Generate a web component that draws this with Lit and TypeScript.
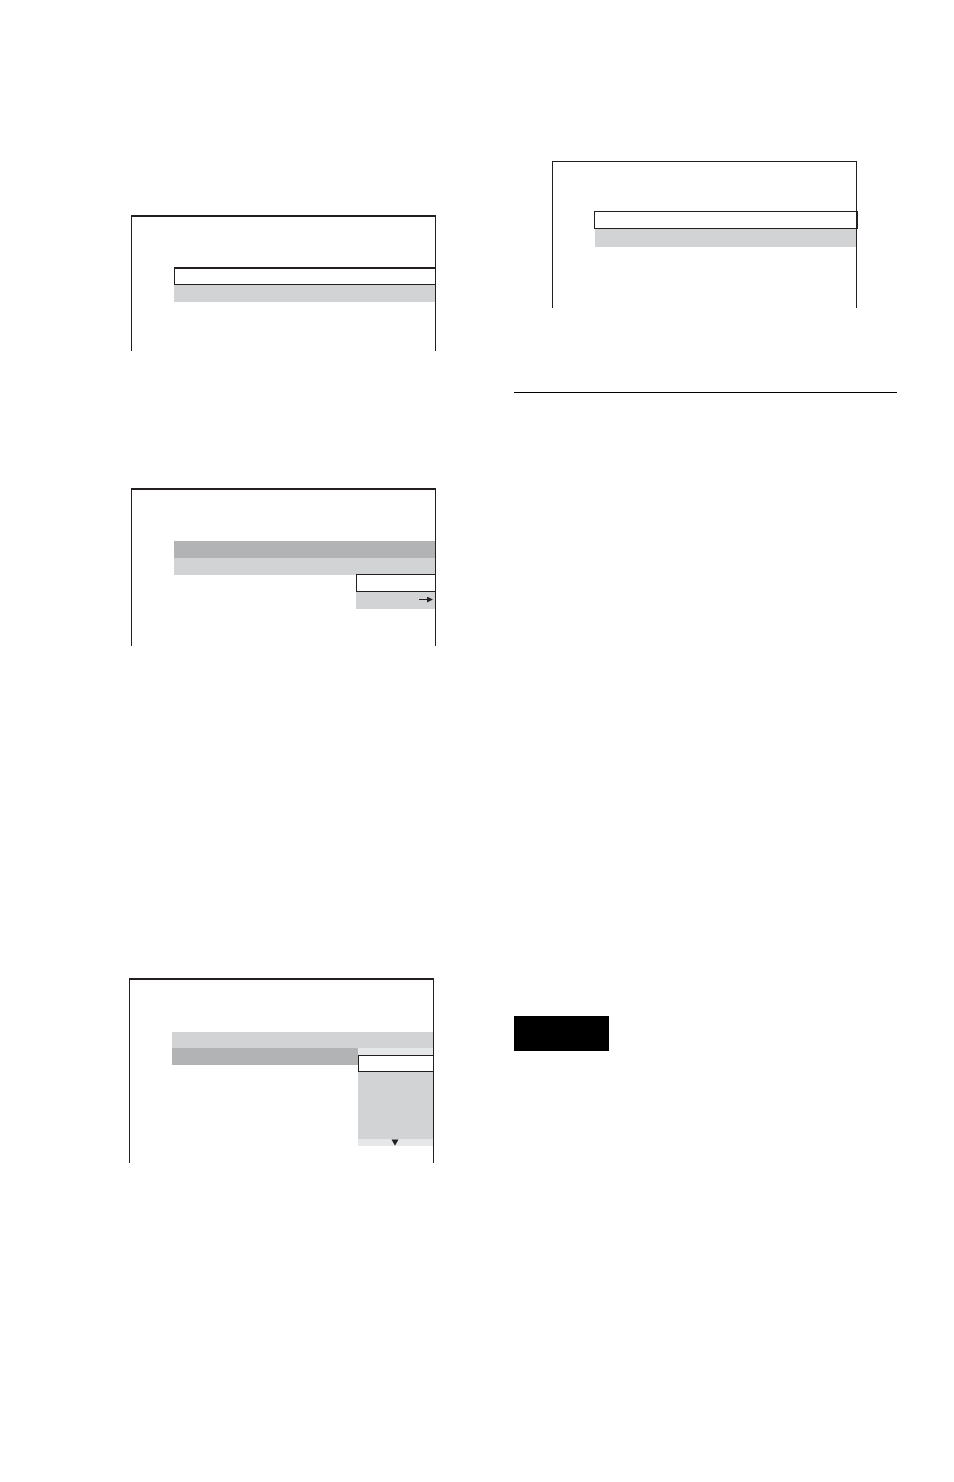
import { LitElement, html, css } from "lit";
import { customElement } from "lit/decorators.js";

@customElement("app-root")
export class AppRoot extends LitElement {
  static styles = css`
    :host {
      display: block;
      min-height: 100vh;
      background: #fff;
      font-family: "Liberation Sans", Arial, sans-serif;
      --line: #231f20;
      --light: #d1d3d4;
      --dark: #b1b3b5;
      --pale: #e6e7e8;
    }
    * {
      box-sizing: border-box;
    }
    .page {
      display: grid;
      grid-template-columns: 1fr 1fr;
      padding: 161px 57px 48px 131px;
    }
    .screen {
      border: 1px solid var(--line);
      border-top-width: 2px;
      border-bottom: 0;
      padding-left: 42px;
    }
    .left {
      padding-top: 54px;
    }
    .left .screen {
      margin-right: 78px;
    }
    .first {
      height: 136px;
      padding-top: 50px;
    }
    .second {
      height: 158px;
      margin-top: 137px;
      padding-top: 51px;
    }
    .left .third {
      height: 185px;
      margin: 332px 80px 0 -2px;
      padding-top: 52px;
    }
    .right .screen {
      height: 147px;
      margin: 0 40px 0 38px;
      padding-top: 49px;
      border-top-width: 1px;
    }
    .list {
      list-style: none;
      margin: 0;
      padding: 0;
      position: relative;
    }
    .row {
      height: 17px;
      background: var(--light);
    }
    .short {
      height: 16px;
    }
    .dark {
      background: var(--dark);
    }
    .picked {
      height: 18px;
      background: #fff;
      border: 1px solid var(--line);
      border-right: 0;
    }
    .heavy {
      border-top-width: 2px;
    }
    .right .picked {
      border-right: 2px solid var(--line);
      margin: 0 -2px 0 -1px;
    }
    .right .row:last-child {
      height: 18px;
    }
    .popup {
      position: absolute;
      right: 0;
      list-style: none;
      margin: 0;
      padding: 0;
    }
    .source {
      top: 33px;
      width: 79px;
    }
    .values {
      top: 16px;
      width: 75px;
    }
    .values .picked {
      height: 17px;
    }
    .options {
      height: 67px;
      background: var(--light);
    }
    .scroll {
      height: 7px;
      background: var(--pale);
      display: flex;
      justify-content: center;
    }
    .more {
      display: flex;
      justify-content: flex-end;
      align-items: center;
      padding-right: 2px;
    }
    svg {
      display: block;
      fill: var(--line);
    }
    .rule {
      border: 0;
      border-top: 1px solid #000;
      margin: 84px 0 0;
    }
    .tag {
      width: 95px;
      height: 35px;
      margin-top: 623px;
      background: #000;
    }
  `;

  render() {
    return html`
      <main class="page">
        <section class="left">
          <div class="screen first">
            <ul class="list">
              <li class="row picked heavy"></li>
              <li class="row"></li>
            </ul>
          </div>
          <div class="screen second">
            <ul class="list">
              <li class="row dark"></li>
              <li class="row">
                <ul class="popup source">
                  <li class="row picked"></li>
                  <li class="row more">
                    <svg width="14" height="7" viewBox="0 0 14 7" aria-hidden="true">
                      <path d="M0 2h8V-0.4L14 2.5 8 5.6V3H0z" />
                    </svg>
                  </li>
                </ul>
              </li>
            </ul>
          </div>
          <div class="screen third">
            <ul class="list">
              <li class="row short"></li>
              <li class="row dark">
                <ul class="popup values">
                  <li class="scroll"></li>
                  <li class="row picked"></li>
                  <li class="options"></li>
                  <li class="scroll">
                    <svg width="9" height="7" viewBox="0 0 9 7" aria-hidden="true">
                      <path d="M0.5 0.4h7L4 6.7z" />
                    </svg>
                  </li>
                </ul>
              </li>
            </ul>
          </div>
        </section>
        <section class="right">
          <div class="screen">
            <ul class="list">
              <li class="row picked"></li>
              <li class="row"></li>
            </ul>
          </div>
          <hr class="rule" />
          <div class="tag"></div>
        </section>
      </main>
    `;
  }
}
